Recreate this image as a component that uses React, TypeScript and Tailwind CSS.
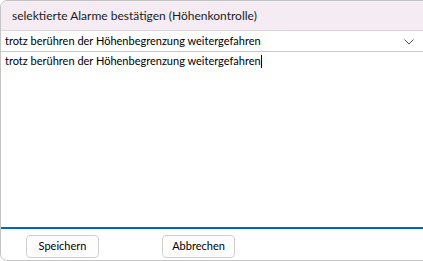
import React from "react";

export default function App() {
  const font = { fontFamily: 'Lato, "Noto Sans", sans-serif' };
  return (
    <div className="w-[423px] h-[261px] overflow-hidden bg-white" style={font}>
      <div className="w-[440px] h-[261px] flex flex-col border border-[#c4c4c4] rounded-l-[7px] overflow-hidden bg-white">
        <div className="h-[30px] shrink-0 bg-[#f4ebf3] border-b border-[#dcd4db] flex items-center pl-[11px] text-[12px] text-[#1b1b1b]">
          selektierte Alarme bestätigen (Höhenkontrolle)
        </div>
        <div className="h-[21px] shrink-0 border-b border-[#c8c8c8] flex items-center justify-between pl-[4px] pr-[25px] text-[11px] text-black bg-white">
          <span>trotz berühren der Höhenbegrenzung weitergefahren</span>
          <svg width="10" height="6" viewBox="0 0 10 6" className="mt-[1px]">
            <path d="M0.5 0.5 L5 5 L9.5 0.5" fill="none" stroke="#555" strokeWidth="1" />
          </svg>
        </div>
        <div className="flex-1 pl-[4px] pt-[2px] text-[11px] leading-[14px] text-black">
          <span>trotz berühren der Höhenbegrenzung weitergefahren</span>
          <span className="inline-block w-[1px] h-[13px] bg-black align-[-3px]" />
        </div>
        <div className="h-[2px] shrink-0 bg-[#0067c0]" />
        <div className="h-[31px] shrink-0 flex items-start pt-[6px] pl-[25px] gap-[63px]">
          <button className="w-[73px] h-[23px] rounded-[4px] border border-[#d0d0d0] bg-[#fdfdfd] text-[11px] text-black">
            Speichern
          </button>
          <button className="w-[73px] h-[23px] rounded-[4px] border border-[#d0d0d0] bg-[#fdfdfd] text-[11px] text-black">
            Abbrechen
          </button>
        </div>
      </div>
    </div>
  );
}
